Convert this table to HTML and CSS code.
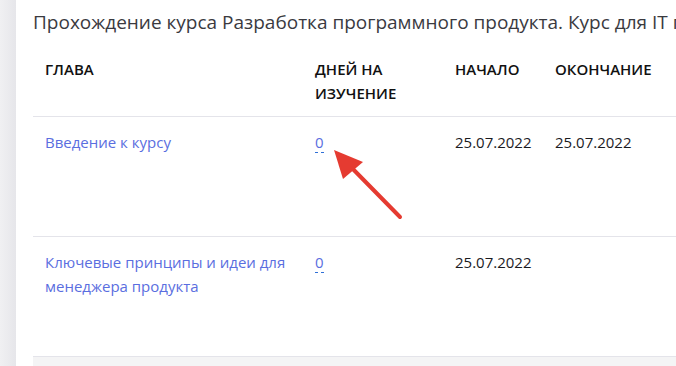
FILE: index.html
```html
<!DOCTYPE html>
<html lang="ru">
<head>
    <meta charset="UTF-8">
    <meta name="viewport" content="width=device-width, initial-scale=1.0">
    <title>Прохождение курса</title>
    <link rel="stylesheet" href="styles.css">
</head>
<body>
    <aside class="side"></aside>
    <main class="content">
        <h1 class="course-title">Прохождение курса Разработка программного продукта. Курс для IT продакт-менеджеров</h1>
        <table class="chapters">
            <thead>
                <tr>
                    <th class="col-name">Глава</th>
                    <th class="col-days">Дней на изучение</th>
                    <th class="col-start">Начало</th>
                    <th class="col-end">Окончание</th>
                </tr>
            </thead>
            <tbody>
                <tr>
                    <td><a href="#" class="chapter-link">Введение к курсу</a></td>
                    <td><a href="#" class="days-link">0</a></td>
                    <td>25.07.2022</td>
                    <td>25.07.2022</td>
                </tr>
                <tr>
                    <td><a href="#" class="chapter-link">Ключевые принципы и идеи для менеджера продукта</a></td>
                    <td><a href="#" class="days-link">0</a></td>
                    <td>25.07.2022</td>
                    <td></td>
                </tr>
                <tr class="row-muted">
                    <td></td><td></td><td></td><td></td>
                </tr>
            </tbody>
        </table>
    </main>
    <!-- pointer drawn over the days column -->
    <svg class="pointer" width="90" height="90" viewBox="0 0 90 90">
        <line x1="72" y1="71" x2="20" y2="18" stroke="#e53b31" stroke-width="4" stroke-linecap="round"/>
        <polygon points="6,4 35,16 15,33" fill="#e53b31"/>
    </svg>
</body>
</html>
```

FILE: styles.css
```css
* {
    margin: 0;
    padding: 0;
    box-sizing: border-box;
}
body {
    font-family: 'Open Sans', 'Noto Sans', sans-serif;
    background: #fff;
    color: #1b1b1f;
    display: flex;
    height: 100vh;
    overflow: hidden;
    position: relative;
}
.side {
    width: 16px;
    flex-shrink: 0;
    background: linear-gradient(to right, #f0f0f2, #e6e6ea);
}
.content {
    flex: 1;
    padding: 9px 0 0 17px;
    overflow: hidden;
}
.course-title {
    font-size: 19px;
    font-weight: 400;
    line-height: 26px;
    color: #3a3a3f;
    white-space: nowrap;
}
.chapters {
    margin-top: 10px;
    border-collapse: collapse;
    width: 760px;
    table-layout: fixed;
}
.chapters th {
    text-align: left;
    font-size: 15px;
    font-weight: 600;
    text-transform: uppercase;
    line-height: 24px;
    padding: 12px 12px 11px;
    vertical-align: top;
    color: #111;
    border-bottom: 1px solid #e4e4ea;
}
.col-name { width: 270px; }
.col-days { width: 140px; }
.col-start { width: 100px; }
.col-end { width: 250px; }
.chapters td {
    font-size: 15px;
    line-height: 24px;
    padding: 13px 12px;
    height: 120px;
    vertical-align: top;
    border-bottom: 1px solid #e4e4ea;
}
.chapter-link {
    color: #5a6ee0;
    text-decoration: none;
}
.days-link {
    color: #5a6ee0;
    text-decoration: none;
    border-bottom: 1px dashed #2f6fd6;
}
.row-muted td {
    background: #f4f4f5;
    border-bottom: none;
}
.pointer {
    position: absolute;
    left: 328px;
    top: 146px;
}
```
